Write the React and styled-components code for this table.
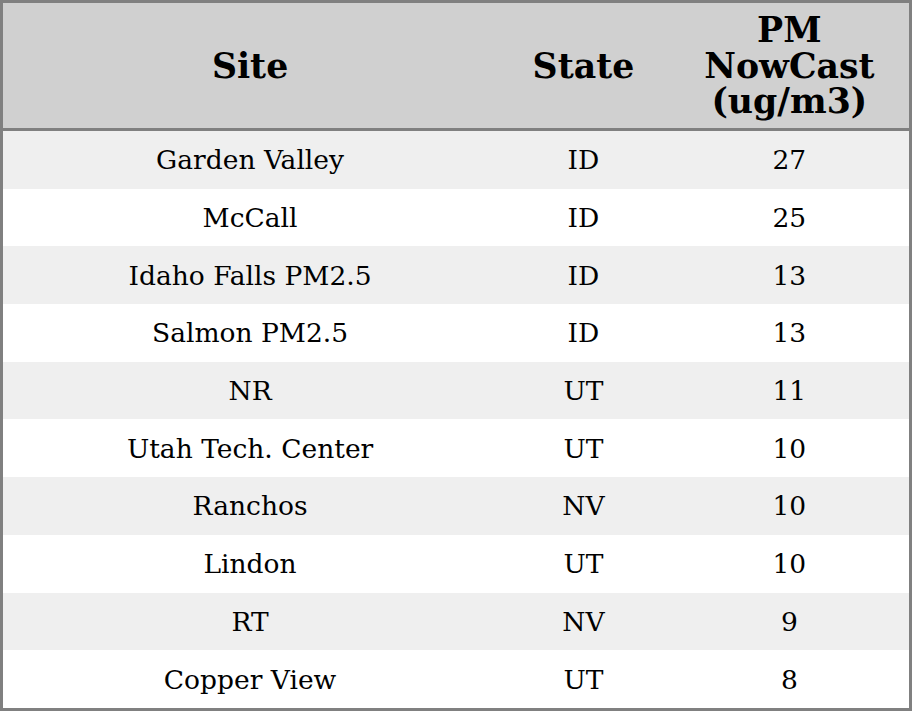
import React from 'react';
import styled, { createGlobalStyle } from 'styled-components';

const GlobalStyle = createGlobalStyle`
  html, body {
    margin: 0;
    padding: 0;
    background: #ffffff;
  }
  body {
    font-family: "DejaVu Serif", "Liberation Serif", serif;
  }
`;

const Table = styled.table`
  width: 912px;
  height: 711px;
  border-collapse: collapse;
  border: 3px solid #808080;
  table-layout: fixed;
  font-family: "DejaVu Serif", "Liberation Serif", serif;
  color: #000;
`;

const Col = styled.col`
  width: ${(p) => p.w}px;
`;

const HeadCell = styled.th`
  height: 125px;
  padding: 0;
  background: #d0d0d0;
  border-bottom: 3px solid #808080;
  font-size: 34.7px;
  font-weight: bold;
  line-height: 35.5px;
  text-align: center;
  vertical-align: middle;
`;

const Row = styled.tr`
  background: ${(p) => (p.odd ? '#efefef' : '#ffffff')};
`;

const Cell = styled.td`
  height: 57px;
  padding: 0;
  font-size: 26.5px;
  text-align: center;
  vertical-align: middle;
`;

const rows = [
  ['Garden Valley', 'ID', 27],
  ['McCall', 'ID', 25],
  ['Idaho Falls PM2.5', 'ID', 13],
  ['Salmon PM2.5', 'ID', 13],
  ['NR', 'UT', 11],
  ['Utah Tech. Center', 'UT', 10],
  ['Ranchos', 'NV', 10],
  ['Lindon', 'UT', 10],
  ['RT', 'NV', 9],
  ['Copper View', 'UT', 8],
];

const App = () => (
  <>
    <GlobalStyle />
    <Table>
      <colgroup>
        <Col w={494} />
        <Col w={172} />
        <Col w={240} />
      </colgroup>
      <thead>
        <tr>
          <HeadCell>Site</HeadCell>
          <HeadCell>State</HeadCell>
          <HeadCell>
            PM
            <br />
            NowCast
            <br />
            (ug/m3)
          </HeadCell>
        </tr>
      </thead>
      <tbody>
        {rows.map(([site, state, value], i) => (
          <Row key={site} odd={i % 2 === 0}>
            <Cell>{site}</Cell>
            <Cell>{state}</Cell>
            <Cell>{value}</Cell>
          </Row>
        ))}
      </tbody>
    </Table>
  </>
);

export default App;
